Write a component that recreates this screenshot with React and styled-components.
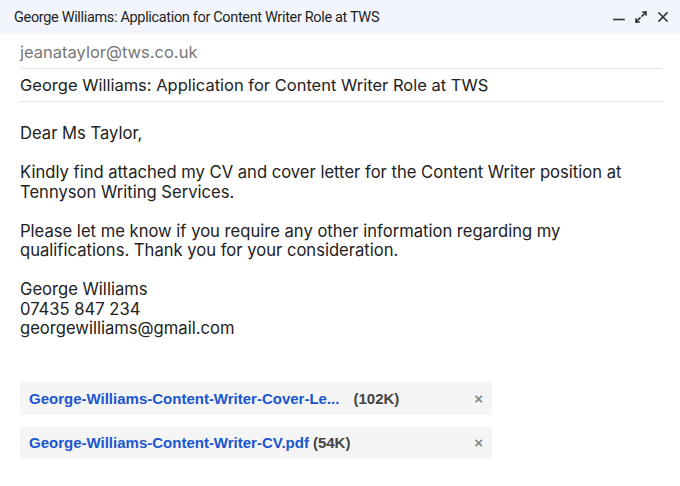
import React from "react";
import styled, { createGlobalStyle } from "styled-components";

const Global = createGlobalStyle`
  html, body { margin: 0; padding: 0; background: #fff; }
  body { font-family: "Inter", "Noto Sans", sans-serif; }
`;

const Window = styled.div`
  width: 680px;
  height: 486px;
  background: #fff;
  display: flex;
  flex-direction: column;
`;

const TitleBar = styled.div`
  height: 34px;
  background: #f2f6fc;
  display: flex;
  align-items: center;
  justify-content: space-between;
  padding: 0 10px 0 14px;
`;

const Title = styled.div`
  font-family: Roboto, "Liberation Sans", sans-serif;
  font-size: 14.5px;
  letter-spacing: -0.34px;
  color: #1f1f1f;
`;

const Controls = styled.div`
  display: flex;
  align-items: center;
  gap: 8px;
  color: #333;
`;

const Fields = styled.div`
  padding: 0 18px 0 20px;
`;

const Field = styled.div`
  font-family: "Inter", "Noto Sans", sans-serif;
  font-size: 16.5px;
  color: ${(p) => (p.muted ? "#777" : "#222")};
  height: 32px;
  line-height: 32px;
  border-bottom: 1px solid #e6e6e6;
  padding-top: ${(p) => (p.first ? "2px" : "0")};
`;

const Body = styled.div`
  padding: 22px 20px 0 20px;
  font-family: "Inter", "Noto Sans", sans-serif;
  font-size: 16.6px;
  line-height: 19.5px;
  color: #222;
`;

const Para = styled.p`
  margin: 0 0 19.5px 0;
`;

const Attachments = styled.div`
  padding: 24px 0 0 20px;
  display: flex;
  flex-direction: column;
  gap: 11px;
`;

const Attachment = styled.div`
  width: 472px;
  height: 33px;
  background: #f5f5f5;
  display: flex;
  align-items: center;
  padding: 0 9px;
  box-sizing: border-box;
  font-family: "Liberation Sans", Arial, sans-serif;
  font-size: 15px;
  font-weight: 700;
`;

const FileName = styled.span`
  color: #1a56cf;
  margin-right: ${(p) => p.gap || "4px"};
`;

const Size = styled.span`
  color: #444;
  flex: 1;
`;

const Remove = styled.span`
  color: #888;
  font-size: 15px;
  font-weight: 700;
`;

const Icon = ({ children }) => (
  <svg width="14" height="14" viewBox="0 0 14 14" fill="none" stroke="#333" strokeWidth="1.6" strokeLinecap="square">
    {children}
  </svg>
);

export default function App() {
  return (
    <Window>
      <Global />
      <TitleBar>
        <Title>George Williams: Application for Content Writer Role at TWS</Title>
        <Controls>
          <Icon><path d="M2 9.5h10" /></Icon>
          <Icon>
            <path d="M8 6l4-4M9 2h3v3M6 8l-4 4M2 9v3h3" />
          </Icon>
          <Icon><path d="M3 3l8 8M11 3l-8 8" /></Icon>
        </Controls>
      </TitleBar>
      <Fields>
        <Field muted first>jeanataylor@tws.co.uk</Field>
        <Field>George Williams: Application for Content Writer Role at TWS</Field>
      </Fields>
      <Body>
        <Para>Dear Ms Taylor,</Para>
        <Para>
          Kindly find attached my CV and cover letter for the Content Writer position at
          <br />
          Tennyson Writing Services.
        </Para>
        <Para>
          Please let me know if you require any other information regarding my
          <br />
          qualifications. Thank you for your consideration.
        </Para>
        <Para>
          George Williams
          <br />
          07435 847 234
          <br />
          georgewilliams@gmail.com
        </Para>
      </Body>
      <Attachments>
        <Attachment>
          <FileName gap="14px">George-Williams-Content-Writer-Cover-Le...</FileName>
          <Size>(102K)</Size>
          <Remove>×</Remove>
        </Attachment>
        <Attachment>
          <FileName>George-Williams-Content-Writer-CV.pdf</FileName>
          <Size>(54K)</Size>
          <Remove>×</Remove>
        </Attachment>
      </Attachments>
    </Window>
  );
}
